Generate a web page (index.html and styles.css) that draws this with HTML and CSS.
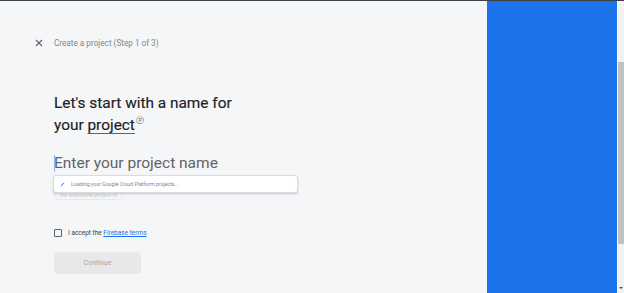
FILE: index.html
```html
<!DOCTYPE html>
<html>
<head>
<meta charset="utf-8">
<link rel="stylesheet" href="styles.css">
</head>
<body>
<div class="topline"></div>
<div class="layout">
  <main class="main">
    <header class="header">
      <svg class="close" width="8" height="8" viewBox="0 0 8 8"><path d="M1 1L7 7M7 1L1 7" stroke="#5f6368" stroke-width="1.1"/></svg>
      <span class="step">Create a project (Step 1 of 3)</span>
    </header>
    <h1 class="title">Let's start with a name for<br>your <span class="under">project</span><span class="help">&#9413;</span></h1>
    <div class="field">
      <div class="input"><span class="caret"></span>Enter your project name</div>
      <div class="below">
        <span class="chip">my-awesome-project-id</span>
        <div class="loading">
          <svg class="spin" width="5" height="5" viewBox="0 0 5 5"><path d="M1 4.2L3.8 0.8" stroke="#1a73e8" stroke-width="1"/></svg>
          <span>Loading your Google Cloud Platform projects...</span>
        </div>
      </div>
    </div>
    <label class="accept"><span class="box"></span>I accept the&nbsp;<a href="#">Firebase terms</a></label>
    <button class="continue">Continue</button>
  </main>
  <aside class="blue"></aside>
  <div class="sep"></div>
  <div class="scroll">
    <div class="thumb"></div>
    <div class="arrow"></div>
  </div>
</div>
</body>
</html>
```

FILE: styles.css
```css
html, body { margin: 0; padding: 0; height: 100%; overflow: hidden; }
body { background: #f5f6f8; font-family: Roboto, "Liberation Sans", sans-serif; }
.topline { height: 1px; background: #3c4043; }
.layout { display: flex; height: 292px; }
.main { width: 487px; flex: none; padding-left: 54px; box-sizing: border-box; position: relative; }
.header { display: flex; align-items: center; height: 12px; margin-top: 36px; position: relative; }
.close { position: absolute; left: -19px; top: 2px; }
.step { font-size: 8.2px; color: #80868b; }
.title { margin: 43px 0 0; font-family: Roboto, sans-serif; font-weight: 400; font-size: 15.4px; line-height: 22px; color: #202124; -webkit-text-stroke: 0.15px #202124; }
.under { text-decoration: underline; text-decoration-thickness: 1px; text-underline-offset: 3px; text-decoration-color: #5f6368; }
.help { font-size: 8px; color: #5f6368; position: relative; top: -7px; margin-left: 1px; line-height: 0; -webkit-text-stroke: 0; }
.field { margin-top: 17px; width: 244px; }
.input { font-family: Roboto, sans-serif; font-size: 15.5px; color: #5f6368; line-height: 20px; position: relative; }
.caret { position: absolute; left: 0; top: 2px; width: 1px; height: 17px; background: #8ab4f8; }
.below { position: relative; height: 28px; margin-top: 2px; }
.chip { position: absolute; left: 0; top: 15px; font-size: 5.5px; color: #c8c9cc; border: 1px solid #e6e7ea; border-radius: 6px; padding: 0 5px; line-height: 8px; }
.loading { position: absolute; left: -1px; top: 0; width: 245px; height: 18px; background: #fff; border: 1px solid #dadce0; border-radius: 3px; box-shadow: 0 1px 2px rgba(60,64,67,.25); display: flex; align-items: center; gap: 6px; padding-left: 6px; box-sizing: border-box; font-size: 5.2px; color: #80868b; }
.accept { display: flex; align-items: center; margin-top: 25px; font-size: 6.5px; color: #3c4043; height: 9px; }
.box { width: 6px; height: 6px; border: 1.3px solid #5f6368; border-radius: 1px; margin-right: 6px; }
.accept a { color: #1a73e8; text-decoration: underline; }
.continue { display: block; margin-top: 15px; width: 87px; height: 22px; border: none; border-radius: 4px; background: #e8e8ea; color: #a5a7aa; font-family: Roboto, sans-serif; font-size: 7px; padding: 0; }
.blue { width: 130px; flex: none; background: #1a73e8; }
.sep { width: 1px; background: #ffffff; flex: none; }
.scroll { width: 6px; flex: none; background: #f1f1f1; position: relative; }
.thumb { position: absolute; left: 0; right: 0; top: 61px; height: 182px; background: #c1c1c1; }
.arrow { position: absolute; left: 1px; bottom: 4px; width: 0; height: 0; border-left: 2px solid transparent; border-right: 2px solid transparent; border-top: 2px solid #505050; }
```
